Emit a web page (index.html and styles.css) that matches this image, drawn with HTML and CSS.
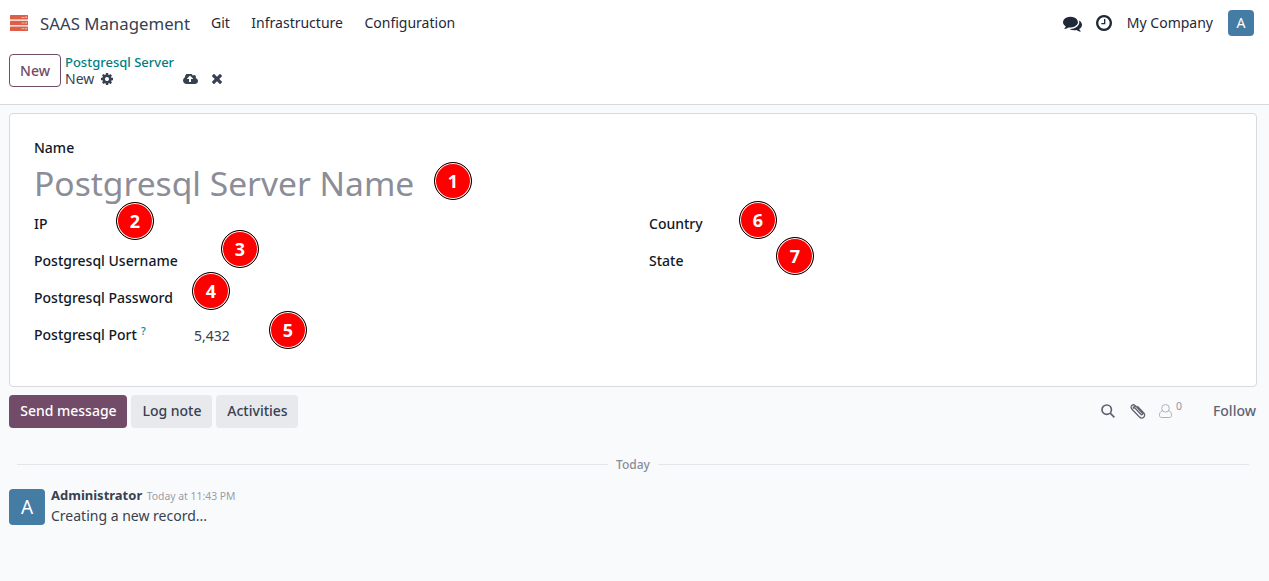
FILE: index.html
```html
<!DOCTYPE html>
<html lang="en">
<head>
<meta charset="utf-8">
<title>Postgresql Server</title>
<link rel="stylesheet" href="styles.css">
</head>
<body>
<header class="navbar">
  <svg class="app-icon" viewBox="0 0 18 16"><g fill="#dc6048"><rect width="18" height="4.600" rx=".6"/><rect y="5.700" width="18" height="4.600" rx=".6"/><rect y="11.400" width="18" height="4.600" rx=".6"/></g><g fill="#f8d8d0"><rect x="11.500" y="2" width="3" height=".7"/><rect x="15.500" y="1.500" width="1.200" height="1.500"/><rect x="11.500" y="7.700" width="3" height=".7"/><rect x="15.500" y="7.200" width="1.200" height="1.500"/><rect x="11.500" y="13.400" width="3" height=".7"/><rect x="15.500" y="12.900" width="1.200" height="1.500"/></g></svg>
  <span class="brand">SAAS Management</span>
  <nav class="menu"><a>Git</a><a>Infrastructure</a><a>Configuration</a></nav>
  <div class="systray">
    <svg class="comments" viewBox="0 0 1792 1792"><path d="M1408 768q0 139-94 257t-256.500 186.500-353.500 68.500q-86 0-176-16-124 88-278 128-36 9-86 16h-3q-11 0-20.500-8t-11.500-21q-1-3-1-6.500t.5-6.500 2-6l2.500-5 3.500-5.500 4-5 4.500-5 4-4.500q5-6 23-25t26-29.500 22.500-29 25-38.500 20.500-44q-124-72-195-177t-71-224q0-139 94-257t256.500-186.500 353.500-68.500 353.500 68.500 256.500 186.500 94 257zm384 256q0 120-71 224.500t-195 176.500q10 24 20.500 44t25 38.500 22.500 29 26 29.500 23 25q1 1 4 4.500t4.500 5 4 5 3.500 5.500l2.500 5 2 6 .5 6.500-1 6.500q-3 14-13 22t-22 7q-50-7-86-16-154-40-278-128-90 16-176 16-271 0-472-132 58 4 88 4 161 0 309-45t264-129q125-92 192-212t67-254q0-77-23-152 129 71 204 178t75 230z"/></svg>
    <svg class="clock" viewBox="128 128 1536 1536"><path d="M1024 544v448q0 14-9 23t-23 9h-320q-14 0-23-9t-9-23v-64q0-14 9-23t23-9h224v-352q0-14 9-23t23-9h64q14 0 23 9t9 23zm416 352q0-148-73-273t-198-198-273-73-273 73-198 198-73 273 73 273 198 198 273 73 273-73 198-198 73-273zm224 0q0 209-103 385.500t-279.500 279.500-385.500 103-385.500-103-279.500-279.500-103-385.500 103-385.500 279.500-279.500 385.500-103 385.500 103 279.500 279.500 103 385.500z"/></svg>
    <span class="company">My Company</span>
    <span class="avatar small">A</span>
  </div>
</header>
<div class="control-panel">
  <button class="btn-new">New</button>
  <div class="crumbs">
    <a class="crumb-link">Postgresql Server</a>
    <div class="crumb-row">
      <span>New</span>
      <svg class="cog" viewBox="128 128 1536 1536"><path d="M1152 896q0-106-75-181t-181-75-181 75-75 181 75 181 181 75 181-75 75-181zm512-109v222q0 12-8 23t-20 13l-185 28q-19 54-39 91 35 50 107 138 10 12 10 25t-9 23q-27 37-99 108t-94 71q-12 0-26-9l-138-108q-44 23-91 38-16 136-29 186-7 28-36 28h-222q-14 0-24.500-8.500t-11.500-21.500l-28-184q-49-16-90-37l-141 107q-10 9-25 9-14 0-25-11-126-114-165-168-7-10-7-23 0-12 8-23 15-21 51-66.500t54-70.500q-27-50-41-99l-183-27q-13-2-21-12.500t-8-23.500v-222q0-12 8-23t19-13l186-28q14-46 39-92-40-57-107-138-10-12-10-24 0-10 9-23 26-36 98.500-107.500t94.500-71.500q13 0 26 10l138 107q44-23 91-38 16-136 29-186 7-28 36-28h222q14 0 24.500 8.500t11.500 21.500l28 184q49 16 90 37l142-107q9-9 24-9 13 0 25 10 129 119 165 170 7 8 7 22 0 12-8 23-15 21-51 66.500t-54 70.500q26 50 41 98l183 28q13 2 21 12.500t8 23.500z"/></svg>
      <svg class="cloud" viewBox="0 256 1920 1280"><path d="M1280 864q0-14-9-23l-352-352q-9-9-23-9t-23 9l-351 351q-10 12-10 24 0 14 9 23t23 9h224v352q0 13 9.500 22.500t22.500 9.500h192q13 0 22.500-9.500t9.500-22.500v-352h224q13 0 22.500-9.500t9.500-22.500zm640 288q0 159-112.500 271.500t-271.500 112.500h-1088q-185 0-316.500-131.500t-131.500-316.500q0-130 70-240t188-165q-2-30-2-43 0-212 150-362t362-150q156 0 285.500 87t188.500 231q71-62 166-62 106 0 181 75t75 181q0 76-41 138 130 31 213.500 135.500t83.500 238.500z"/></svg>
      <svg class="times" viewBox="302 366 1188 1188"><path d="M1490 1322q0 40-28 68l-136 136q-28 28-68 28t-68-28l-294-294-294 294q-28 28-68 28t-68-28l-136-136q-28-28-28-68t28-68l294-294-294-294q-28-28-28-68t28-68l136-136q28-28 68-28t68 28l294 294 294-294q28-28 68-28t68 28l136 136q28 28 28 68t-28 68l-294 294 294 294q28 28 28 68z"/></svg>
    </div>
  </div>
</div>
<main class="content">
  <section class="sheet">
    <div class="label name-label">Name</div>
    <div class="title">Postgresql Server Name</div>
    <div class="groups">
      <div class="group">
        <div class="field"><span class="label">IP</span></div>
        <div class="field"><span class="label">Postgresql Username</span></div>
        <div class="field"><span class="label">Postgresql Password</span></div>
        <div class="field"><span class="label">Postgresql Port<sup>?</sup></span><span class="value">5,432</span></div>
      </div>
      <div class="group">
        <div class="field"><span class="label">Country</span></div>
        <div class="field"><span class="label">State</span></div>
      </div>
    </div>
  </section>
  <div class="toolbar">
    <button class="btn primary">Send message</button>
    <button class="btn">Log note</button>
    <button class="btn">Activities</button>
    <div class="tools">
      <svg class="search" viewBox="0 0 14 14"><circle cx="5.700" cy="5.700" r="4.700"/><path d="M9.200 9.200l4.200 4.200"/></svg>
      <svg class="clip" viewBox="0 0 16 16"><path d="M4.500 4.500l6.300 6.700c1.200 1.200 2.400 0 1.400-1.200L5.800 3.100C3 .1-.7 3.400 2 6.300l7.200 7.500c3.200 3.200 7.400-.9 4.400-4L7.300 3.200M3.800 5.600c-1.200-1.300.2-2.500 1.400-1.300"/></svg>
      <svg class="user" viewBox="0 0 13 14"><circle cx="6.500" cy="4.300" r="3.800"/><path d="M3.500 6.700C1.200 7.300.5 9.300.5 11.200c0 1.500.7 2.300 2 2.300h8c1.300 0 2-.8 2-2.300 0-1.900-.7-3.900-3-4.500"/></svg>
      <span class="count">0</span>
      <span class="follow">Follow</span>
    </div>
  </div>
  <div class="divider"><span>Today</span></div>
  <article class="message">
    <span class="avatar large">A</span>
    <div>
      <div class="meta"><b>Administrator</b><time>Today at 11:43 PM</time></div>
      <div class="text">Creating a new record...</div>
    </div>
  </article>
</main>
<span class="pin p1">1</span><span class="pin p2">2</span><span class="pin p3">3</span><span class="pin p4">4</span><span class="pin p5">5</span><span class="pin p6">6</span><span class="pin p7">7</span>
</body>
</html>
```
FILE: styles.css
```css
* { box-sizing: border-box; }
body {
  margin: 0;
  height: 581px;
  overflow: hidden;
  position: relative;
  background: #f9fafc;
  color: #374151;
  font: 14px/21px "Noto Sans", sans-serif;
}
svg { display: block; flex: none; fill: currentColor; }
button { font: inherit; }
.navbar {
  display: flex;
  align-items: center;
  height: 46px;
  padding: 0 15px 0 10px;
  background: #fff;
  color: #1f2937;
}
.app-icon { width: 18px; height: 16px; }
.brand { margin-left: 12px; font-size: 16.800px; color: #374151; width: 150px; white-space: nowrap; }
.menu { display: flex; gap: 21.500px; margin: 0 0 2px 21px; }
.systray { display: flex; align-items: center; margin-left: auto; }
.comments { width: 19px; height: 19px; }
.clock { width: 16px; height: 16px; margin-left: 14px; }
.company { margin: 0 0 2px 15px; }
.avatar {
  display: flex;
  align-items: center;
  justify-content: center;
  flex: none;
  border-radius: 4px;
  background: #457ca4;
  color: #fff;
}
.small { width: 26px; height: 26px; margin-left: 15px; font-size: 14px; line-height: 20px; padding-bottom: 1px; }
.control-panel {
  display: flex;
  height: 59px;
  padding: 8px 9px;
  background: #fff;
  border-bottom: 1px solid #d8dadd;
}
.btn-new {
  width: 52px;
  height: 33px;
  padding: 0;
  border: 1px solid #714b67;
  border-radius: 4px;
  background: #fff;
  color: #714b67;
  font-weight: 500;
}
.crumbs { margin-left: 4px; line-height: 17px; }
.crumb-link { display: block; color: #017e84; font-size: 13px; font-weight: 500; }
.crumb-row { display: flex; align-items: center; margin-top: -1px; }
.cog { width: 12px; height: 12px; margin-left: 7px; }
.cloud { width: 15px; height: 10px; margin-left: 70px; }
.times { width: 10px; height: 10px; margin: 1px 0 0 14px; }
.content { padding: 8px 12px 0 9px; }
.sheet {
  width: 1248px;
  height: 274px;
  padding: 23px 24px;
  border: 1px solid #d8dadd;
  border-radius: 4px;
  background: #fff;
}
.label { color: #111827; font-weight: 500; }
.title { height: 48px; line-height: 51px; font-size: 33.600px; color: #8b8d97; white-space: nowrap; }
.groups { display: grid; grid-template-columns: 615px 1fr; margin-top: 7px; }
.field { display: flex; height: 37px; }
.field .label { width: 160px; white-space: nowrap; }
.value { padding-top: 1px; }
sup { margin-left: 4px; color: #018597; font-size: 10.500px; line-height: 0; vertical-align: 5px; }
.toolbar { display: flex; gap: 4px; margin-top: 8px; height: 33px; }
.btn {
  padding: 0 10.600px 2px 11.200px;
  border: 0;
  border-radius: 4px;
  background: #e7e9ed;
  color: #374151;
  font-weight: 500;
}
.primary { background: #714b67; color: #fff; }
.tools { display: flex; align-items: center; margin-left: auto; padding: 0 1px 2px 0; color: #5f6472; }
.tools svg { fill: none; stroke: currentColor; }
.search { width: 14px; height: 14px; stroke-width: 1.700; }
.tools .clip { width: 16px; height: 16px; margin: 1px 0 0 15px; stroke-width: 1.300; }
.user { width: 13px; height: 14px; margin: 1px 0 0 13px; color: #adb0b9; }
.count { margin: -9px 0 0 4px; font-size: 10.500px; color: #92959f; }
.follow { margin-left: 31px; font-weight: 500; }
.divider {
  display: flex;
  align-items: center;
  gap: 8px;
  height: 20px;
  margin: 26px 8px 0;
  color: #898d97;
  font-size: 12px;
  font-weight: 500;
}
.divider::before, .divider::after { content: ""; flex: 1; height: 1px; background: #e4e6e9; }
.message { display: flex; gap: 6px; margin-top: 12px; }
.large { width: 36px; height: 36px; margin-top: 3px; font-size: 19px; }
.meta { line-height: 17px; }
.meta b { font-size: 13px; font-weight: 700; }
.meta time { margin-left: 4.500px; font-size: 10.400px; color: #9a9da6; }
.text { line-height: 21px; }
/* Numbered callouts overlaying the form */
.pin {
  position: absolute;
  width: 38px;
  height: 38px;
  border: 1.500px solid #000;
  border-radius: 50%;
  background: red;
  box-shadow: inset 0 0 0 1px #fff;
  color: #fff;
  font: 700 18px/37px "Noto Sans", sans-serif;
  text-align: center;
}
.p1 { left: 434px; top: 162px; }
.p2 { left: 116px; top: 202px; }
.p3 { left: 221px; top: 230px; }
.p4 { left: 192px; top: 272px; }
.p5 { left: 269px; top: 311px; }
.p6 { left: 739px; top: 201px; }
.p7 { left: 776px; top: 237px; }
```
